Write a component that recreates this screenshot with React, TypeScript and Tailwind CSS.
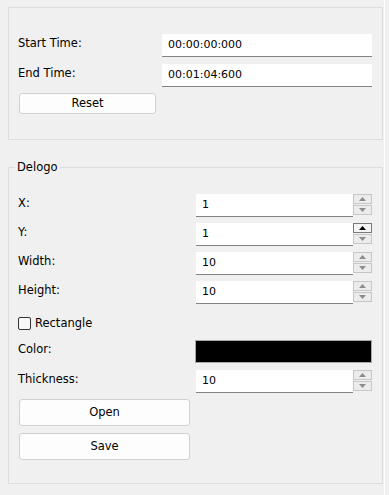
import React from "react";

const font = { fontFamily: '"DejaVu Sans", Tahoma, sans-serif' };

function Arrow({ up, dark }: { up?: boolean; dark?: boolean }) {
  return (
    <svg width="7" height="4" viewBox="0 0 7 4" className="block">
      {up ? (
        <polygon points="0,4 7,4 3.5,0" fill={dark ? "#000" : "#8c8c8c"} />
      ) : (
        <polygon points="0,0 7,0 3.5,4" fill={dark ? "#000" : "#8c8c8c"} />
      )}
    </svg>
  );
}

function Spin({ value, hoverUp }: { value: string; hoverUp?: boolean }) {
  return (
    <div className="flex h-[23px] w-[176px]">
      <div className="flex h-[23px] w-[157px] items-center border-b border-[#838383] bg-white pl-[6px] text-[11px] text-black">
        {value}
      </div>
      <div className="flex h-[23px] w-[19px] flex-col gap-[1px] pb-[2px]">
        <div
          className={
            hoverUp
              ? "flex h-[10px] items-center justify-center border border-[#7a7a7a] bg-[#f4f4f4]"
              : "flex h-[10px] items-center justify-center border border-[#c6c6c6] bg-[#ececec]"
          }
        >
          <Arrow up dark={hoverUp} />
        </div>
        <div className="flex h-[10px] items-center justify-center border border-[#c6c6c6] bg-[#ececec]">
          <Arrow />
        </div>
      </div>
    </div>
  );
}

function Row({ label, children }: { label: string; children: React.ReactNode }) {
  return (
    <div className="flex h-[23px] items-start justify-between">
      <div className="pt-[3px] text-[11.5px] leading-[13px] text-black">{label}</div>
      {children}
    </div>
  );
}

function Btn({ label, w, h }: { label: string; w: string; h: string }) {
  return (
    <div
      className={`flex ${w} ${h} items-center justify-center rounded-[3px] border border-[#d0d0d0] bg-[#fdfdfd] text-[11.5px] text-black`}
    >
      {label}
    </div>
  );
}

export default function App() {
  return (
    <div className="flex h-[495px] w-[389px] bg-[#f0f0f0]" style={font}>
      <div className="w-[384px] px-[8px] pt-[7px]">
        {/* Group 1 */}
        <div className="h-[133px] w-[375px] border border-[#dcdcdc] pl-[9px] pr-[10px] pt-[26px]">
          <Row label="Start Time:">
            <div className="flex h-[23px] w-[210px] items-center border-b border-[#838383] bg-white pl-[6px] text-[11px]">
              00:00:00:000
            </div>
          </Row>
          <div className="mt-[7px]">
            <Row label="End Time:">
              <div className="flex h-[23px] w-[210px] items-center border-b border-[#838383] bg-white pl-[6px] text-[11px]">
                00:01:04:600
              </div>
            </Row>
          </div>
          <div className="mt-[6px] pl-[1px]">
            <Btn label="Reset" w="w-[137px]" h="h-[21px]" />
          </div>
        </div>

        {/* Group 2 */}
        <div className="relative mt-[27px] h-[317px] w-[375px] border border-[#dcdcdc] pl-[9px] pr-[10px] pt-[26px]">
          <span className="absolute -top-[8px] left-[6px] bg-[#f0f0f0] px-[2px] text-[11.5px] leading-[14px] text-black">
            Delogo
          </span>
          <Row label="X:">
            <Spin value="1" />
          </Row>
          <div className="mt-[6px]">
            <Row label="Y:">
              <Spin value="1" hoverUp />
            </Row>
          </div>
          <div className="mt-[6px]">
            <Row label="Width:">
              <Spin value="10" />
            </Row>
          </div>
          <div className="mt-[6px]">
            <Row label="Height:">
              <Spin value="10" />
            </Row>
          </div>
          <div className="mt-[13px] flex h-[13px] items-center gap-[4px]">
            <div className="h-[13px] w-[13px] rounded-[2px] border border-[#333333] bg-[#f7f7f7]" />
            <span className="text-[11.5px] leading-[13px] text-black">Rectangle</span>
          </div>
          <div className="mt-[10px]">
            <Row label="Color:">
              <div className="h-[23px] w-[177px] border border-[#a8a8a8] bg-black" />
            </Row>
          </div>
          <div className="mt-[7px]">
            <Row label="Thickness:">
              <Spin value="10" />
            </Row>
          </div>
          <div className="mt-[6px] pl-[1px]">
            <Btn label="Open" w="w-[171px]" h="h-[27px]" />
          </div>
          <div className="mt-[7px] pl-[1px]">
            <Btn label="Save" w="w-[171px]" h="h-[27px]" />
          </div>
        </div>
      </div>
      <div className="h-[495px] w-px bg-white" />
      <div className="flex-1" />
    </div>
  );
}
